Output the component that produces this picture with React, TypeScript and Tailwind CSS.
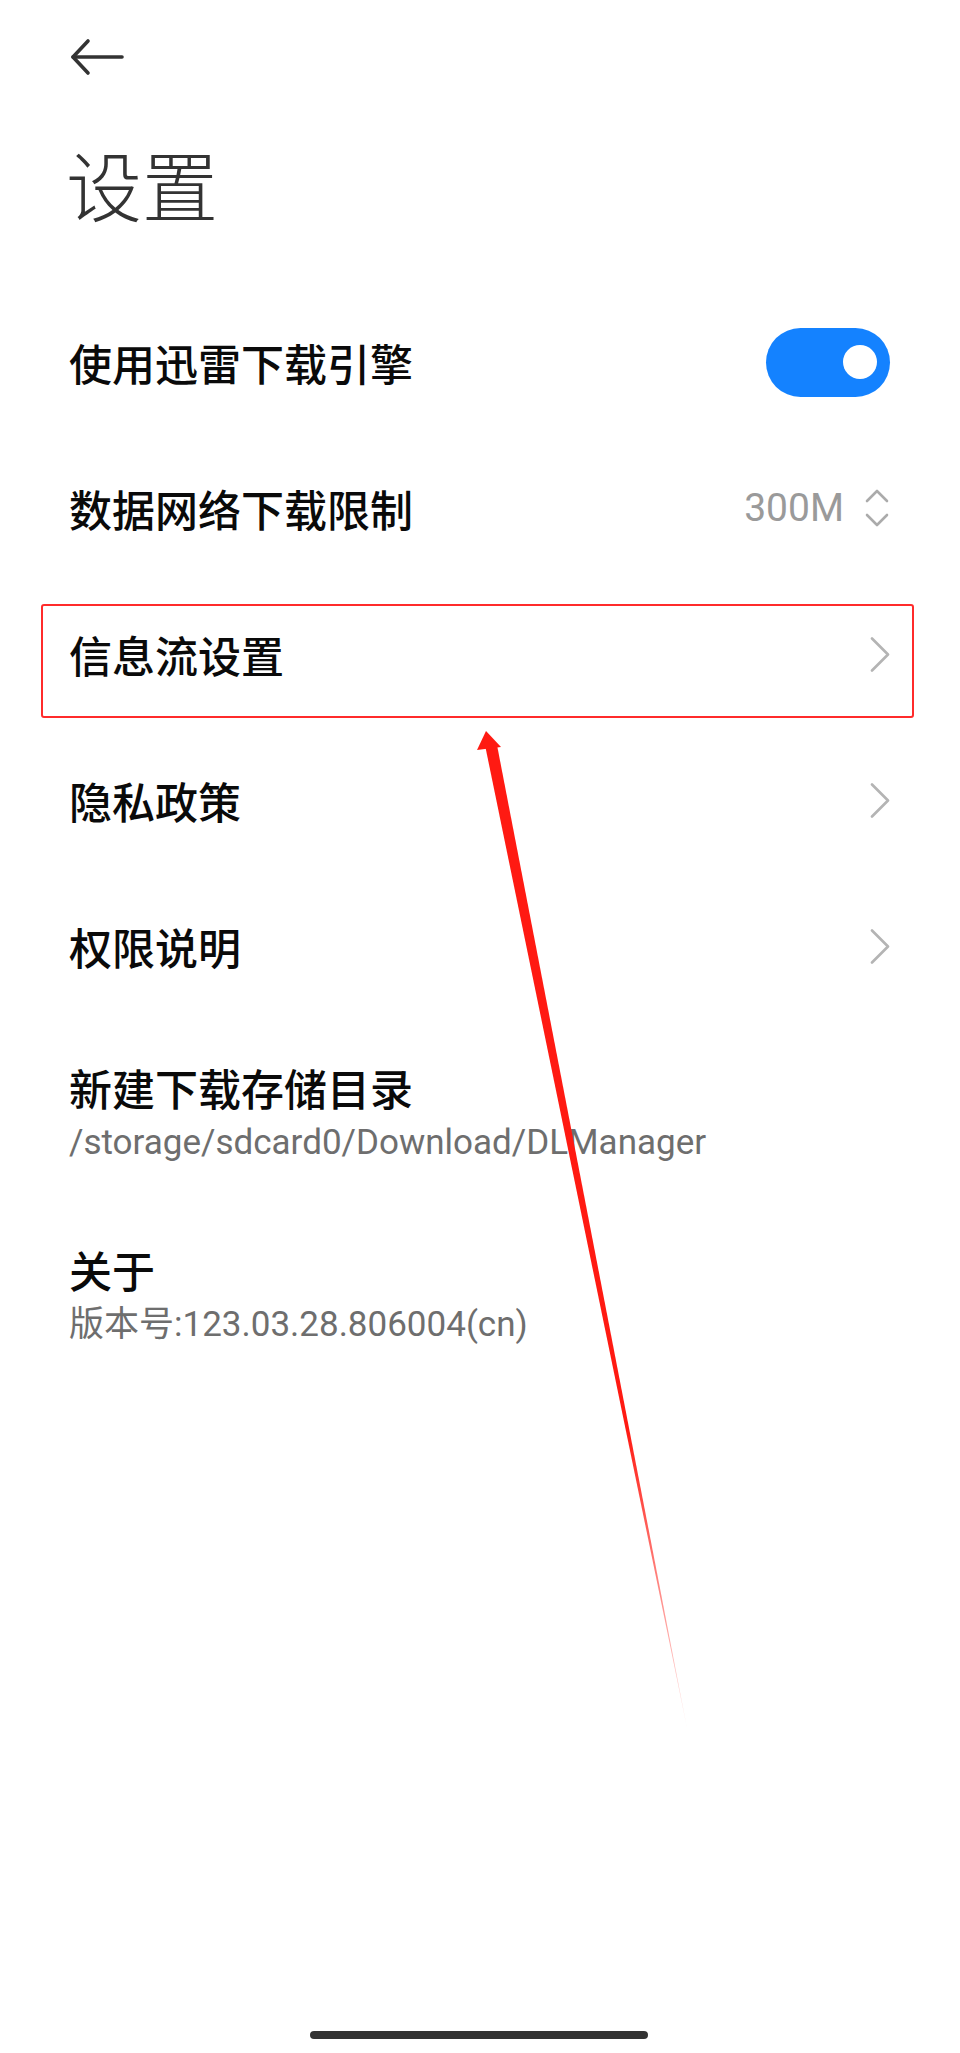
import React from "react";

const CJK = { fontFamily: '"Noto Sans CJK SC", "Noto Sans", sans-serif' };

function Chevron() {
  return (
    <svg width="20" height="35" viewBox="0 0 20 35" fill="none">
      <polyline
        points="2,1.5 18,17.5 2,33.5"
        stroke="#b4b4b4"
        strokeWidth="2.6"
        strokeLinecap="round"
        strokeLinejoin="round"
      />
    </svg>
  );
}

function UpDown() {
  return (
    <svg width="26" height="40" viewBox="0 0 26 40" fill="none">
      <polyline points="3,13 13,3 23,13" stroke="#ababab" strokeWidth="2.6" strokeLinecap="round" strokeLinejoin="round" />
      <polyline points="3,27 13,37 23,27" stroke="#ababab" strokeWidth="2.6" strokeLinecap="round" strokeLinejoin="round" />
    </svg>
  );
}

function Row({ title, right }: { title: string; right?: React.ReactNode }) {
  return (
    <div className="flex h-[146px] items-center justify-between pl-[69px] pr-[70px]">
      <span className="text-[43px] font-medium leading-none text-[#0a0a0a]">{title}</span>
      {right}
    </div>
  );
}

function TwoLine({ title, sub, className }: { title: string; sub: string; className?: string }) {
  return (
    <div className={"pl-[69px] " + (className ?? "")}>
      <div className="text-[43px] font-medium leading-[56px] text-[#0a0a0a]">{title}</div>
      <div
        className="mt-[8px] text-[35px] leading-[40px] text-[#6e6e6e]"
        style={{ fontFamily: 'Roboto, "Noto Sans CJK SC", sans-serif' }}
      >
        {sub}
      </div>
    </div>
  );
}

export default function App() {
  return (
    <div className="relative h-[2053px] w-[960px] overflow-hidden bg-white" style={CJK}>
      {/* header */}
      <div className="flex h-[113px] items-center pl-[70px]">
        <svg width="54" height="38" viewBox="0 0 54 38" fill="none">
          <line x1="3" y1="19" x2="52" y2="19" stroke="#333" strokeWidth="3.6" strokeLinecap="round" />
          <polyline points="18,3 3,19 18,35" stroke="#333" strokeWidth="3.6" strokeLinecap="round" strokeLinejoin="round" />
        </svg>
      </div>

      <h1 className="mt-[32px] pl-[66px] text-[76px] font-light leading-none text-[#333]">设置</h1>

      <div className="mt-[68px]">
        <Row
          title="使用迅雷下载引擎"
          right={
            <div className="flex h-[69px] w-[124px] items-center justify-end rounded-full bg-[#1482ff] pr-[13px]">
              <div className="h-[34px] w-[34px] rounded-full bg-white" />
            </div>
          }
        />
        <Row
          title="数据网络下载限制"
          right={
            <div className="flex items-center gap-[20px]">
              <span className="text-[39px] leading-none text-[#9a9a9a]" style={{ fontFamily: 'Roboto, sans-serif' }}>
                300M
              </span>
              <UpDown />
            </div>
          }
        />
        <Row title="信息流设置" right={<Chevron />} />
        <Row title="隐私政策" right={<Chevron />} />
        <Row title="权限说明" right={<Chevron />} />
      </div>

      <TwoLine className="pt-[40px]" title="新建下载存储目录" sub="/storage/sdcard0/Download/DLManager" />
      <TwoLine className="mt-[78px]" title="关于" sub="版本号:123.03.28.806004(cn)" />

      {/* home indicator */}
      <div className="absolute bottom-[14px] left-[310px] h-[8px] w-[338px] rounded-full bg-[#333]" />

      {/* annotation: highlight box */}
      <div className="absolute left-[41px] top-[604px] h-[114px] w-[873px] rounded-[3px] border-2 border-[#ff2b2b]" />

      {/* annotation: arrow */}
      <svg className="pointer-events-none absolute left-0 top-0" width="960" height="2053" viewBox="0 0 960 2053">
        <defs>
          <linearGradient id="fade" x1="0" y1="733" x2="0" y2="1728" gradientUnits="userSpaceOnUse">
            <stop offset="0" stopColor="#ff1a12" />
            <stop offset="0.7" stopColor="#ff1a12" />
            <stop offset="1" stopColor="#ff1a12" stopOpacity="0.1" />
          </linearGradient>
        </defs>
        <polygon points="486,731 477,750 501,747" fill="#ff1a12" />
        <polygon points="485,745 497,745 687,1728" fill="url(#fade)" />
      </svg>
    </div>
  );
}
